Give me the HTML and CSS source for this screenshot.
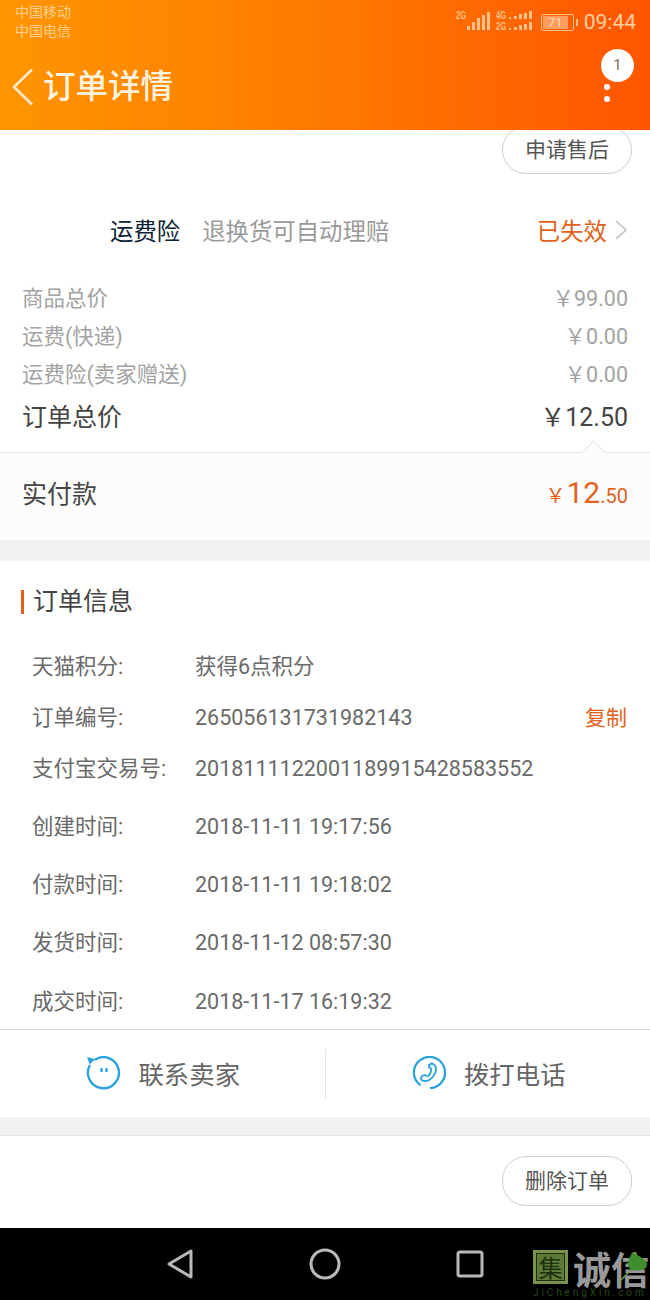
FILE: index.html
```html
<!DOCTYPE html>
<html lang="zh">
<head>
<meta charset="utf-8">
<title>订单详情</title>
<link rel="stylesheet" href="styles.css">
</head>
<body>
<div class="page">
  <header class="header">
    <div class="status">
      <div class="carriers"><div>中国移动</div><div>中国电信</div></div>
      <div class="sys">
        <svg class="sig" width="34" height="22" viewBox="0 0 34 22"><text x="0" y="9" class="tiny" textLength="10" lengthAdjust="spacingAndGlyphs">2G</text><g fill="#ffc08a"><rect x="11" y="16" width="3" height="4"/><rect x="16" y="12" width="3" height="8"/><rect x="21" y="8" width="3" height="12"/><rect x="26" y="5" width="3" height="15"/><rect x="31" y="2" width="3" height="18"/></g></svg>
        <svg class="sig2" width="36" height="22" viewBox="0 0 36 22"><text x="0" y="9" class="tiny" textLength="10" lengthAdjust="spacingAndGlyphs">4G</text><text x="0" y="20" class="tiny" textLength="10" lengthAdjust="spacingAndGlyphs">2G</text><g fill="#ffc08a"><rect x="13" y="7" width="2" height="2"/><rect x="18" y="6" width="3" height="3"/><rect x="23" y="4" width="3" height="5"/><rect x="28" y="3" width="3" height="6"/><rect x="33" y="1" width="3" height="8"/><rect x="13" y="18" width="2" height="2"/><rect x="18" y="17" width="3" height="3"/><rect x="23" y="15" width="3" height="5"/><rect x="28" y="14" width="3" height="6"/><rect x="33" y="12" width="3" height="8"/></g></svg>
        <div class="battery"><span class="batt-fill">71</span></div><i class="batt-tip"></i>
        <span class="clock">09:44</span>
      </div>
    </div>
    <div class="titlebar">
      <svg class="back" width="24" height="40" viewBox="0 0 24 40"><path d="M21 2.500 3 20l18 17.500" fill="none" stroke="#ffe9cf" stroke-width="2.600"/></svg>
      <h1 class="title">订单详情</h1>
      <div class="more"><span class="badge">1</span><i class="dot dot-first"></i><i class="dot"></i></div>
    </div>
  </header>

  <main class="content">
    <div class="btn-row first"><span class="pill">申请售后</span></div>
    <div class="ins">
      <span class="ins-name">运费险</span>
      <span class="ins-desc">退换货可自动理赔</span>
      <span class="ins-state">已失效</span>
      <svg class="chev" width="14" height="22" viewBox="0 0 14 22"><path d="M2 2l10 9-10 9" fill="none" stroke="#c9c9c9" stroke-width="1.800"/></svg>
    </div>
    <div class="prices">
      <div class="price"><span>商品总价</span><span>&#xFFE5;99.00</span></div>
      <div class="price"><span>运费(快递)</span><span>&#xFFE5;0.00</span></div>
      <div class="price"><span>运费险(卖家赠送)</span><span>&#xFFE5;0.00</span></div>
      <div class="total"><span>订单总价</span><span>&#xFFE5;12.50</span></div>
    </div>
    <div class="paid">
      <i class="caret"></i>
      <span class="paid-label">实付款</span>
      <span class="paid-amt"><small class="yen">&#xFFE5;</small><b class="big">12</b><small class="cents">.50</small></span>
    </div>
    <div class="band"></div>
    <section class="info">
      <h2 class="info-title">订单信息</h2>
      <div class="rows">
        <div class="row r1"><span class="k">天猫积分:</span><span class="v">获得6点积分</span></div>
        <div class="row r1"><span class="k">订单编号:</span><span class="v">265056131731982143</span><span class="copy">复制</span></div>
        <div class="row r1"><span class="k">支付宝交易号:</span><span class="v">2018111122001189915428583552</span></div>
        <div class="row r2"><span class="k">创建时间:</span><span class="v">2018-11-11 19:17:56</span></div>
        <div class="row r2"><span class="k">付款时间:</span><span class="v">2018-11-11 19:18:02</span></div>
        <div class="row r2"><span class="k">发货时间:</span><span class="v">2018-11-12 08:57:30</span></div>
        <div class="row r2"><span class="k">成交时间:</span><span class="v">2018-11-17 16:19:32</span></div>
      </div>
    </section>
    <div class="actions">
      <div class="action">
        <svg width="34" height="34" viewBox="0 0 34 34"><path d="M9 3.700A15.500 15.500 0 1 1 4 9" fill="none" stroke="#2ba3dc" stroke-width="2.400"/><path d="M1 1l8.500 2.300-6 5z" fill="#2ba3dc"/><ellipse cx="15.500" cy="14" rx="1.400" ry="2.300" fill="#2ba3dc"/><ellipse cx="20.500" cy="14" rx="1.400" ry="2.300" fill="#2ba3dc"/></svg>
        <span>联系卖家</span>
      </div>
      <i class="vline"></i>
      <div class="action">
        <svg width="34" height="34" viewBox="0 0 36 36"><path d="M9 31a16.500 16.500 0 1 1 10 3" fill="none" stroke="#2ba3dc" stroke-width="2.400"/><path d="M19.500 8.500c2-1.500 4.500 1 5.500 3 1.500 4-1.500 11-7 14-3 1.500-7.500 1.500-8.500-1-.7-2 1.500-4 3.500-4.200 2-.2 3 1.800 4.200.8 1.600-1.300 3.800-5.500 3-7.300-.6-1.300-2.500-1.300-2.500-2.800 0-.8 1.300-1.800 2.300-2.500z" fill="none" stroke="#2ba3dc" stroke-width="2"/></svg>
        <span>拨打电话</span>
      </div>
    </div>
    <div class="band2"></div>
    <div class="btn-row last"><span class="pill">删除订单</span></div>
  </main>

  <footer class="nav">
    <svg width="28" height="32" viewBox="0 0 28 32"><path d="M25 3v26L3 16z" fill="none" stroke="#b9b9b9" stroke-width="3" stroke-linejoin="round"/></svg>
    <svg width="32" height="32" viewBox="0 0 32 32"><circle cx="16" cy="16" r="14" fill="none" stroke="#b9b9b9" stroke-width="3"/></svg>
    <svg width="28" height="28" viewBox="0 0 28 28"><rect x="2" y="2" width="24" height="24" rx="2" fill="none" stroke="#b9b9b9" stroke-width="3"/></svg>
    <div class="mark">
      <div class="mark-top"><span class="seal">集</span><span class="mark-text">诚信</span></div>
      <div class="mark-url">JiChengXin.com</div>
      <svg class="leaf" width="32" height="34" viewBox="0 0 32 34"><path d="M15 2c4 4 15 7 14 13-1 6-9 6-16 5-5-4-3-11 2-18z" fill="#3f8f2e"/><path d="M13 20 1 32" stroke="#6e9c5a" stroke-width="1.500"/></svg>
    </div>
  </footer>
</div>
</body>
</html>
```

FILE: styles.css
```css
* { box-sizing: border-box; }
html, body { margin: 0; padding: 0; background: #fff; }
body { font-family: Roboto, "Noto Sans CJK SC", sans-serif; }
.page { width: 650px; height: 1300px; display: flex; flex-direction: column; overflow: hidden; }

.header { height: 130px; flex: none; position: relative; z-index: 2; background: linear-gradient(90deg, #ff9500 0%, #ff7a00 50%, #ff5500 100%); }
.status { height: 44px; display: flex; justify-content: space-between; padding: 3px 14px 0 15px; }
.carriers { font-size: 14px; line-height: 19px; color: #ffd08f; }
.sys { display: flex; align-items: center; height: 38px; color: #ffc08a; }
.sig { margin: 0 6px 2px 0; }
.sig2 { margin: 0 9px 2px 0; }
.tiny { font: bold 11px "Liberation Sans", sans-serif; fill: #ffc08a; }
.battery { width: 33px; height: 17px; border: 1px solid #ffc08a; border-radius: 2px; padding: 1px; }
.batt-fill { display: block; width: 25px; height: 13px; background: #ff9d5e; font-size: 13px; line-height: 13px; text-align: center; color: #ffd9b5; }
.batt-tip { width: 2px; height: 7px; margin-left: 2px; background: #ffc08a; }
.clock { font-size: 21px; margin-left: 6px; color: #ffcfa3; }

.titlebar { height: 86px; display: flex; align-items: center; padding: 0 16px 0 11px; }
.back { flex: none; }
.title { margin: 0 0 0 8px; font-size: 32.500px; font-weight: 500; color: #fff3e0; flex: 1; line-height: 40px; }
.more { align-self: flex-start; width: 33px; display: flex; flex-direction: column; align-items: center; gap: 6px; margin-top: 5px; margin-left: -2px; }
.badge { width: 33px; height: 33px; border-radius: 50%; background: #fff; color: #8a6d5a; font-size: 15px; line-height: 33px; text-align: center; }
.dot { width: 6px; height: 6px; border-radius: 50%; background: #fff; margin-left: -21px; }
.dot-first { margin-top: -4px; }

.content { flex: 1; min-height: 0; display: flex; flex-direction: column; overflow: hidden; }
.btn-row { display: flex; justify-content: flex-end; padding-right: 18px; flex: none; }
.btn-row.first { margin-top: -4px; }
.pill { width: 130px; height: 48px; border: 1px solid #cfcfcf; border-radius: 24px; background: #fff; color: #555; font-size: 21px; line-height: 46px; text-align: center; }
.btn-row.last { padding-top: 20px; height: 92px; }
.btn-row.last .pill { height: 50px; line-height: 48px; }

.ins { height: 78px; margin: 17px 0 8px; display: flex; align-items: center; padding: 0 22px 0 110px; font-size: 23.400px; flex: none; }
.ins-name { color: #0d2233; }
.ins-desc { color: #9a9a9a; margin-left: 22px; flex: 1; }
.ins-state { color: #e2621b; }
.chev { margin-left: 7px; }

.prices { padding: 0 22px; flex: none; }
.price { display: flex; justify-content: space-between; height: 38px; align-items: center; font-size: 21.500px; color: #a3a3a3; }
.total { display: flex; justify-content: space-between; align-items: center; height: 48px; font-size: 25px; color: #444; }

.paid { position: relative; flex: none; height: 88px; border-top: 1px solid #e4e4e4; margin-top: 13px; background: #fcfcfc; display: flex; justify-content: space-between; align-items: center; padding: 0 22px 9px; }
.caret { position: absolute; right: 48px; top: -9px; width: 17px; height: 17px; background: #fcfcfc; border-left: 1px solid #e4e4e4; border-top: 1px solid #e4e4e4; transform: rotate(45deg); }
.paid-label { font-size: 25px; color: #444; }
.paid-amt { color: #e2621b; display: flex; align-items: baseline; }
.yen { font-size: 20px; margin-right: 1px; }
.big { font-size: 30px; font-weight: 400; }
.cents { font-size: 20px; }

.band { height: 21px; flex: none; background: #f2f2f2; }
.info { flex: none; height: 468px; }
.info-title { margin: 0 0 0 21px; height: 80px; padding: 29px 0 0 0; display: flex; align-items: flex-start; font-size: 25px; font-weight: 400; color: #444; line-height: 24px; }
.info-title::before { content: ""; width: 3px; height: 24px; background: #e2621b; margin-right: 9px; }
.rows { padding: 0 23px 0 32px; }
.row { display: flex; align-items: baseline; font-size: 21.500px; line-height: 30px; color: #6a6a6a; }
.r1 { height: 51px; padding-top: 11px; }
.r2 { height: 58px; padding-top: 14px; }
.row:nth-child(4) { margin-top: 4px; }
.row:nth-child(7) { margin-top: 1px; }
.k { width: 163px; flex: none; }
.v { flex: 1; }
.copy { color: #e2621b; font-size: 21px; }

.actions { flex: none; height: 88px; border-top: 1px solid #d8d8d8; display: flex; align-items: center; }
.action { flex: 1; display: flex; align-items: center; justify-content: center; gap: 18px; padding: 0 0 1px 2px; font-size: 25.400px; color: #666; }
.vline { width: 1px; height: 50px; background: #e6e6e6; }
.band2 { height: 19px; flex: none; background: #f2f2f2; border-bottom: 1px solid #e4e4e4; }

.nav { position: relative; flex: none; height: 72px; background: #000; display: flex; align-items: center; gap: 115px; padding: 0 0 0 166px; }
.mark { position: absolute; left: 533px; top: 22px; width: 117px; height: 50px; }
.mark-top { display: flex; align-items: flex-start; height: 38px; }
.seal { width: 35px; height: 34px; background: #5d7a38; border: 3px solid #7a9450; box-shadow: inset 0 0 0 1px #1f3010; color: #1c2f0e; font-family: "Noto Sans CJK SC", sans-serif; font-size: 24px; line-height: 28px; text-align: center; }
.mark-text { font-family: "Noto Sans CJK SC", sans-serif; font-weight: 700; font-size: 38px; line-height: 36px; color: #999; margin-left: 5px; white-space: nowrap; }
.mark-url { font-size: 10px; line-height: 10px; letter-spacing: 2.900px; color: #234a18; white-space: nowrap; }
.leaf { position: absolute; left: 85px; top: 0; }
```
